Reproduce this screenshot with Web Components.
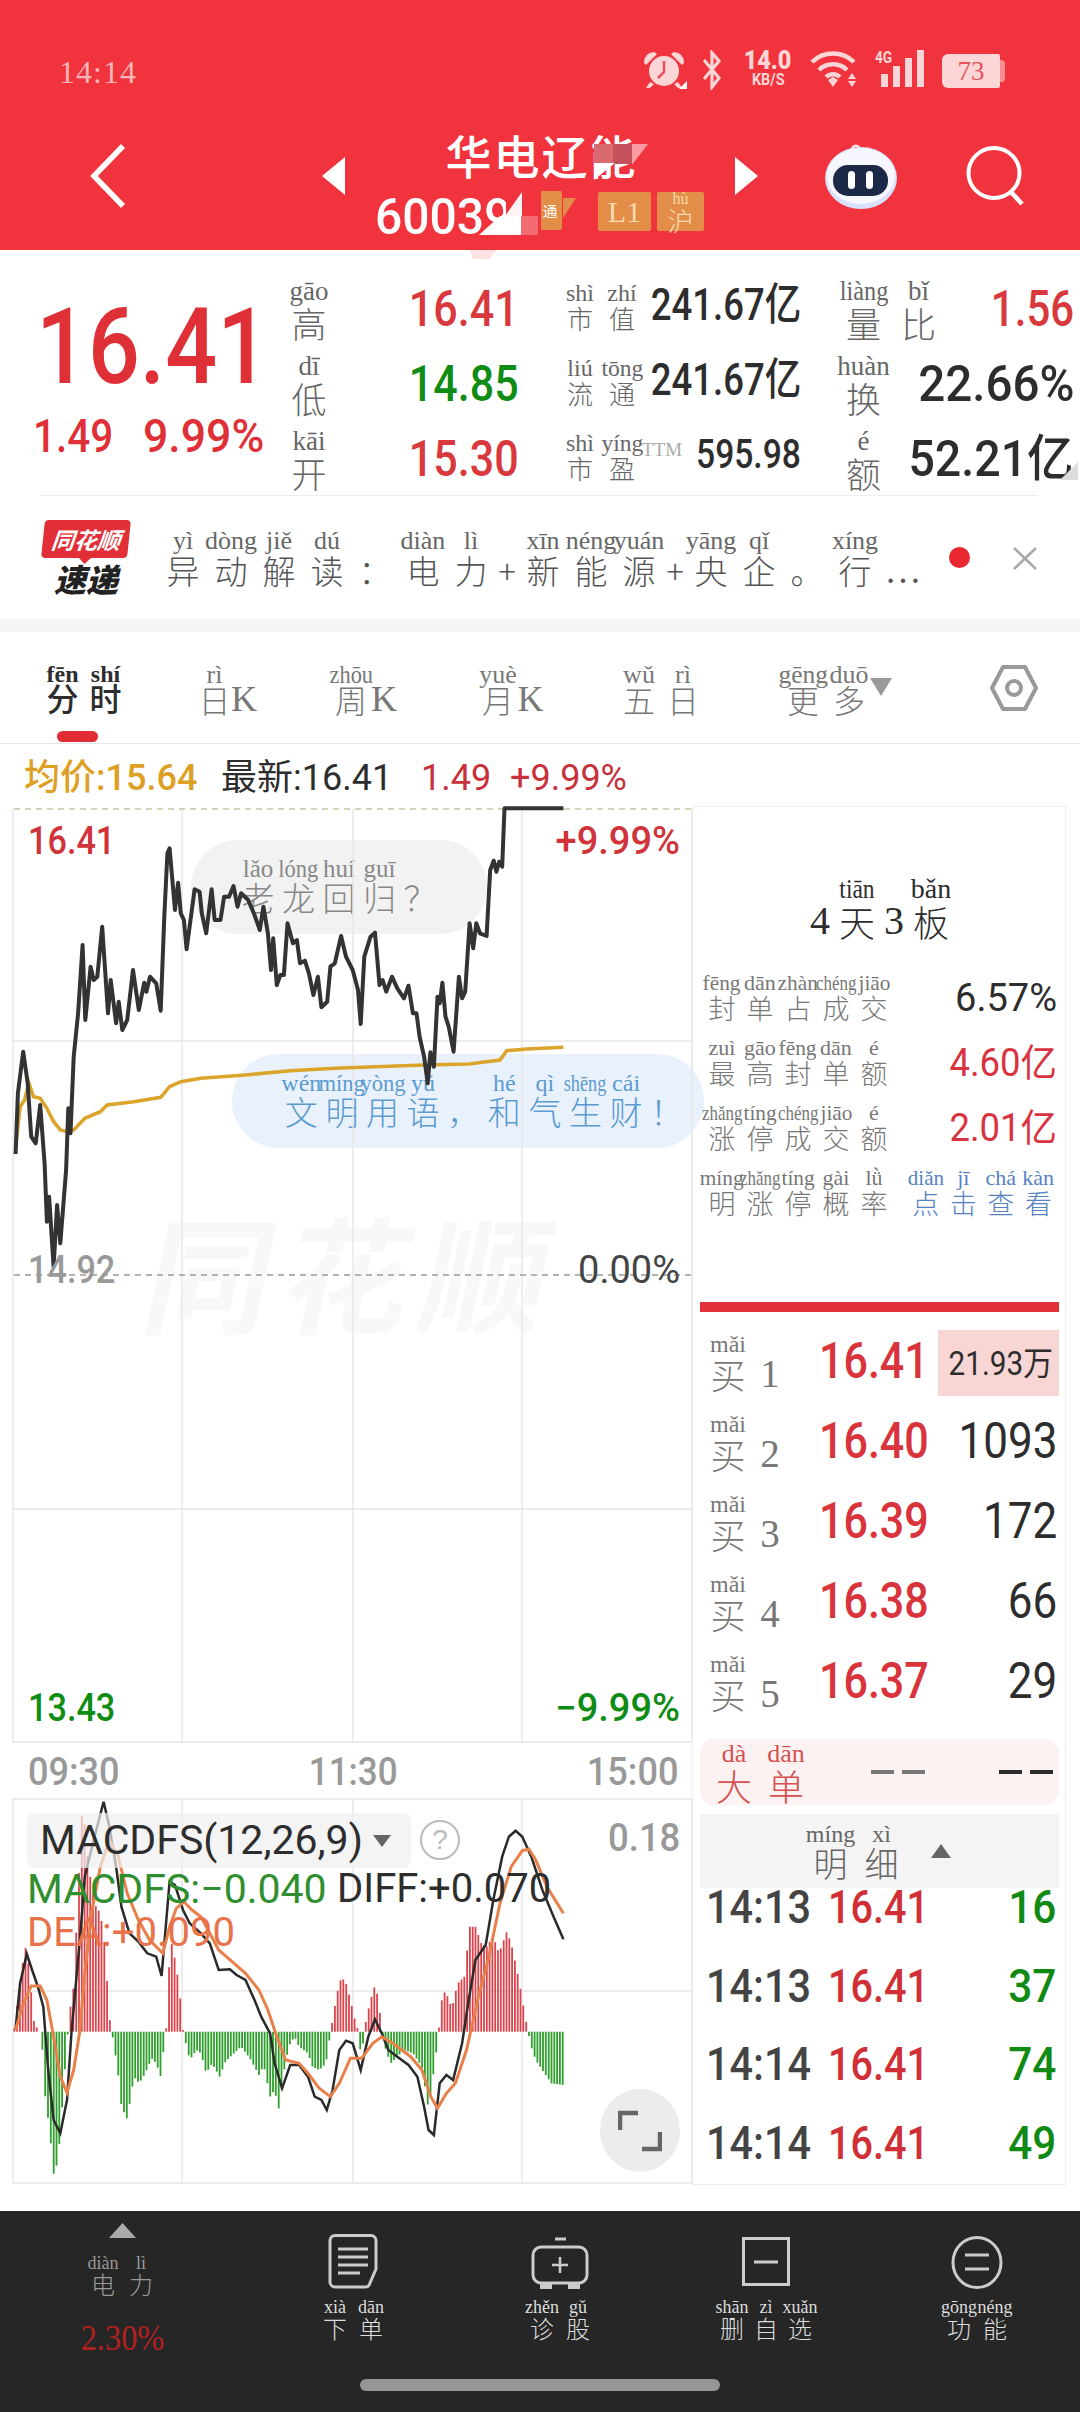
<!DOCTYPE html>
<html lang="zh"><head><meta charset="utf-8"><title>华电辽能</title>
<style>
html,body{margin:0;padding:0;background:#fff}
body{width:1080px;height:2412px;overflow:hidden;font-family:"Noto Sans CJK SC",sans-serif}
x-app{display:block}
</style></head><body><x-app></x-app>
<script>
const def=(n,css,html)=>customElements.define(n,class extends HTMLElement{constructor(){super();const s=this.attachShadow({mode:'open'});const t=document.createElement('template');t.innerHTML=`<style>${css}</style>${html}`;s.append(t.content.cloneNode(true));}});

customElements.define('x-ruby',class extends HTMLElement{
  connectedCallback(){
    if(this.shadowRoot)return;
    const s=this.attachShadow({mode:'open'});
    const g=k=>this.getAttribute(k);
    const chars=[...(g('t')||'')],py=(g('p')||'').split(' '),w=+g('w')||40,sz=+g('s')||30,ps=+g('ps')||20,aw=+g('aw')||Math.round(w*.7);
    const cols=chars.map((c,i)=>{
      const p=py[i]&&py[i]!=='_'?py[i]:'';
      const n=[...p].length;const est=n*ps*.47;const sq=Math.min(1,(w+2)/est);
      const latin=/[0-9A-Za-z…]/.test(c);const half=c==='+';
      const cw=/[0-9A-Za-z]/.test(c)?aw:half?w/2:w;
      return `<span class="c" style="width:${cw}px"><span class="p" style="transform:scaleX(${sq.toFixed(2)})">${p||'&nbsp;'}</span><span class="h${latin?' l':''}">${c}</span></span>`;
    }).join('');
    s.innerHTML=`<style>
    :host{display:inline-flex;line-height:1;vertical-align:top}
    .c{display:flex;flex-direction:column;align-items:center;flex:none}
    .p{font:${ps}px/${ps}px "Liberation Serif",serif;height:${ps}px;white-space:nowrap;display:block;font-weight:var(--pw,400);color:var(--pc,inherit)}
    .h{font:var(--hw,300) ${sz}px/${sz}px "Noto Sans CJK SC",sans-serif;height:${sz}px;white-space:nowrap;display:block;margin-top:var(--rg,0px)}
    .l{font:300 ${Math.round(sz*1.12)}px/${sz}px "Liberation Serif",serif}
    </style>${cols}`;
  }
});

def('x-num',`:host{display:inline-block;font-family:Roboto,"Noto Sans CJK SC",sans-serif;white-space:nowrap;line-height:1;transform:scaleX(var(--sx,1));transform-origin:var(--ox,left) center}`,`<slot></slot>`);

def('x-statusbar',`
:host{display:flex;height:118px;box-sizing:border-box;padding:50px 75px 0 59px;justify-content:space-between;align-items:flex-start;color:#fcd6d6}
.t{font:300 32px/44px "Liberation Serif",serif;color:#f9b4b6;letter-spacing:1px}
.r{display:flex;align-items:flex-start;gap:15px;height:40px}
.sp{display:flex;flex-direction:column;align-items:center;font-family:Roboto,sans-serif;font-weight:700;width:56px;line-height:1}
.sp b{font-size:26px;transform:scaleX(.9);height:23px;display:block;line-height:24px}
.sp i{font-style:normal;font-size:17px;transform:scaleX(.85);display:block;line-height:16px}
.net{position:relative;width:52px;height:38px}
.net span{position:absolute;left:0;top:-1px;font:700 16px/18px Roboto,sans-serif;transform:scaleX(.85);transform-origin:left}
.bat{display:flex;align-items:stretch;height:34px;margin-top:4px}
.bat b{width:58px;background:#fcd6d6;border-radius:6px 2px 2px 6px;font:300 27px/34px "Liberation Serif",serif;color:#e6545c;text-align:center}
.bat i{width:5px;background:#f78f94;border-radius:0 4px 4px 0;margin:6px 0}
`,`<span class="t">14:14</span><span class="r">
<svg width="46" height="40" viewBox="0 0 46 40"><g fill="#fcd6d6"><circle cx="22" cy="21" r="15"/><path d="M2 13 Q2 3 12 2 L15 4 L4 15Z M42 13 Q42 3 32 2 L29 4 L40 15Z M8 32l-4 6h4l4-4z M36 32l4 6h-4l-4-4z"/></g><path d="M22 11v11l-6 6" stroke="#e85058" stroke-width="2.5" fill="none"/><path d="M37 39l8-8v8z" fill="#fff"/></svg>
<svg width="22" height="40" viewBox="0 0 22 40" style="margin-left:-2px"><path d="M3 10l15 18-7 9V3l7 8L3 29" fill="none" stroke="#fcd6d6" stroke-width="3.2"/></svg>
<span class="sp" style="margin:-2px 0 0 2px"><b>14.0</b><i>KB/S</i></span>
<svg width="50" height="38" viewBox="0 0 50 38" style="margin-left:-1px"><g fill="none" stroke="#fcd6d6" stroke-width="4.5"><path d="M2 12A30 30 0 0 1 44 12"/><path d="M9 20A20 20 0 0 1 37 20"/><path d="M16 27A10 10 0 0 1 30 27"/></g><path d="M18 30l5-3 5 3-5 7z" fill="#fcd6d6"/><path d="M42 23l4 6h-8zM42 37l4-6h-8z" fill="#fcd6d6"/></svg>
<span class="net"><span>4G</span><svg width="52" height="38" viewBox="0 0 52 38" style="display:block"><g fill="#fcd6d6"><rect x="6" y="24" width="7" height="13"/><rect x="18" y="16" width="7" height="21"/><rect x="30" y="8" width="7" height="29" /><rect x="42" y="0" width="7" height="37"/></g></svg></span>
<span class="bat"><b>73</b><i></i></span></span>`);

def('x-header',`
:host{display:block;height:250px;background:#f1333d;color:#fff;overflow:visible;position:relative;z-index:1}
.nav{display:grid;grid-template-columns:232px 23px 390px 23px 67px 72px 69px 59px 55px;padding:0 0 16px 90px;height:132px;box-sizing:border-box;align-items:center}
.mid{align-self:start;position:relative;display:flex;flex-direction:column;align-items:center;padding-top:11px}
.name{font:500 46px/50px "Noto Sans CJK SC",sans-serif;letter-spacing:2px;height:50px;margin-left:3px}
.code{display:flex;align-items:flex-start;margin-top:13px;height:42px;align-self:flex-start;padding-left:30px}
.cn{width:165px;height:42px;flex:none}
.tg{background:#e38e48;color:#fbdcae;display:flex;align-items:center;justify-content:center;height:39px;border-radius:2px;flex:none}
.ov{position:absolute;left:0;top:0;overflow:visible;pointer-events:none}
`,`<x-statusbar></x-statusbar><div class="nav">
<svg width="36" height="64" viewBox="0 0 36 64"><path d="M33 2L4 32l29 30" fill="none" stroke="#fff" stroke-width="5.5"/></svg>
<svg width="23" height="38" viewBox="0 0 23 38"><path d="M23 0v38L0 19z" fill="#fff"/></svg>
<div class="mid"><div class="name">华电辽能</div>
<div class="code"><span class="cn"><x-num style="font-size:50px;font-weight:500;--sx:.96">600396</x-num></span>
<span class="tg" style="width:24px;color:#fff;font-size:15px;margin-left:-2px;margin-top:-1px">通</span>
<span class="tg" style="width:53px;margin-left:36px;font:300 30px 'Liberation Serif',serif">L1</span>
<span class="tg" style="width:47px;margin-left:6px"><x-ruby t="沪" p="hù" w="44" s="26" ps="16"></x-ruby></span></div>
<svg class="ov" width="390" height="140"><g transform="translate(-345 -118)">
<rect x="594" y="144" width="19" height="20" fill="#d96a70"/><rect x="613" y="144" width="19" height="20" fill="#c4525c"/><path d="M632 144h16l-16 21z" fill="#fa9ca2"/><path d="M594 163h21l-21 17z" fill="#fff"/>
<path d="M521 190h20v46h-20zM506 190h16v26h-16z" fill="#f1333d"/><path d="M505 216l17-24v24z" fill="#fff" opacity=".95"/>
<path d="M479 235l21-19h21v19z" fill="#fff"/><rect x="521" y="216" width="17" height="19" fill="#f36c74"/><path d="M563 198h13l-13 20z" fill="#e38e48"/>
<path d="M470 250h27l-8 9h-16z" fill="#fde3e3"/></g></svg></div>
<svg width="23" height="38" viewBox="0 0 23 38"><path d="M0 0v38l23-19z" fill="#fff"/></svg><span></span>
<svg width="72" height="66" viewBox="0 0 72 66"><path d="M29 11c-5-4-1-9 3-8 3 1 3 4 1 5" fill="none" stroke="#fbdada" stroke-width="2.5"/><ellipse cx="36" cy="35" rx="36" ry="31" fill="#d9e1fb"/><ellipse cx="36" cy="33" rx="34" ry="28" fill="#f7f8ff"/><rect x="8" y="22" width="55" height="31" rx="15" fill="#1d2a47"/><rect x="23" y="28" width="7" height="18" rx="3.5" fill="#fff"/><rect x="41" y="28" width="7" height="18" rx="3.5" fill="#fff"/></svg><span></span>
<svg width="59" height="60" viewBox="0 0 59 60"><ellipse cx="28" cy="27" rx="25.5" ry="25" fill="none" stroke="#fff" stroke-width="4"/><path d="M45 46l11 12" stroke="#fff" stroke-width="4.5"/></svg><span></span>
</div>`);

def('x-stat',`:host{display:flex;justify-content:space-between;align-items:center;height:75px;padding-left:var(--pl,0);color:#2d2d2d}
::slotted([slot=l]){color:#666}
::slotted([slot=v]){margin-left:-90px}`,`<slot name="l"></slot><slot name="v"></slot>`);

def('x-quote',`
:host{display:grid;grid-template-columns:285px 239px 277px 276px;grid-template-rows:repeat(3,75px);height:245px;box-sizing:border-box;padding-top:21px;position:relative;align-content:start}
.big{grid-row:1/4;padding-left:36px;display:flex;flex-direction:column}
.big x-num{color:#df3038}
.sub{display:flex;margin:13px 0 0 -3px;height:46px}
x-num{--ox:right}
.red{color:#d9383d}.grn{color:#0e8c14}
.tri{position:absolute;left:1056px;top:212px}
`,`<div class="big"><x-num style="font-size:105px;line-height:105px;margin-top:24px;--sx:.87;--ox:left;font-weight:500">16.41</x-num>
<div class="sub"><x-num style="font-size:46px;--ox:left;--sx:.88;width:110px;font-weight:500">1.49</x-num><x-num style="font-size:46px;--ox:left;--sx:.97;font-weight:500">9.99%</x-num></div></div>
<x-stat><x-ruby slot="l" t="高" p="gāo" w="48" s="35" ps="27"></x-ruby><x-num slot="v" class="red" style="font-size:50px;--sx:.86;font-weight:500;margin-right:5px">16.41</x-num></x-stat>
<x-stat style="--pl:35px"><x-ruby slot="l" t="市值" p="shì zhí" w="42" s="26" ps="24" style="margin-top:-6px"></x-ruby><x-num slot="v" style="font-size:44px;--sx:.83;font-weight:500;margin-top:-8px">241.67亿</x-num></x-stat>
<x-stat style="--pl:35px"><x-ruby slot="l" t="量比" p="liàng bǐ" w="55" s="35" ps="27"></x-ruby><x-num slot="v" class="red" style="font-size:50px;--sx:.84;font-weight:500;margin-right:3px">1.56</x-num></x-stat>
<x-stat><x-ruby slot="l" t="低" p="dī" w="48" s="35" ps="27"></x-ruby><x-num slot="v" class="grn" style="font-size:50px;--sx:.86;font-weight:500;margin-right:5px">14.85</x-num></x-stat>
<x-stat style="--pl:35px"><x-ruby slot="l" t="流通" p="liú tōng" w="42" s="26" ps="24" style="margin-top:-6px"></x-ruby><x-num slot="v" style="font-size:44px;--sx:.83;font-weight:500;margin-top:-8px">241.67亿</x-num></x-stat>
<x-stat style="--pl:35px"><x-ruby slot="l" t="换" p="huàn" w="55" s="35" ps="27"></x-ruby><x-num slot="v" style="font-size:50px;--sx:.95;font-weight:500;margin-right:3px">22.66%</x-num></x-stat>
<x-stat><x-ruby slot="l" t="开" p="kāi" w="48" s="35" ps="27"></x-ruby><x-num slot="v" class="red" style="font-size:50px;--sx:.86;font-weight:500;margin-right:5px">15.30</x-num></x-stat>
<x-stat style="--pl:35px"><span slot="l" style="display:flex;color:#666;margin-top:-6px"><x-ruby t="市盈" p="shì yíng" w="42" s="26" ps="24"></x-ruby><span style="font:300 19px/22px 'Liberation Serif',serif;color:#aaa;margin:8px 0 0 -1px">TTM</span></span><x-num slot="v" style="font-size:41px;--sx:.82;font-weight:500;margin-top:-8px">595.98</x-num></x-stat>
<x-stat style="--pl:35px"><x-ruby slot="l" t="额" p="é" w="55" s="35" ps="27"></x-ruby><x-num slot="v" style="font-size:50px;--sx:.93;font-weight:500;margin-right:3px">52.21亿</x-num></x-stat>
<svg class="tri" width="24" height="20"><path d="M22 0v18H4z" fill="#dcdcdc"/></svg>`);

def('x-news',`
:host{display:flex;align-items:center;height:124px;margin:0 42px 0 41px;border-top:1.5px solid #eee;box-sizing:border-box;color:#555;position:relative}
.logo{width:90px;flex:none;display:flex;flex-direction:column;align-items:center;margin-top:-2px}
.a{width:86px;height:38px;background:#e22f37;border-radius:4px;color:#fff;font:italic 700 23px/38px "Noto Sans CJK SC",sans-serif;text-align:center;transform:skewX(-6deg);position:relative}
.a:after{content:"";position:absolute;left:37px;top:37px;border:7px solid transparent;border-top-color:#e22f37;border-bottom:0}
.b{font:italic 900 32px/32px "Noto Sans CJK SC",sans-serif;color:#222;margin-top:4px}
x-ruby{margin:0 0 0 28px;--pc:#666}
.d{position:absolute;left:908px;top:51px;width:21px;height:21px;border-radius:50%;background:#e8272f}
.x{position:absolute;left:971px;top:50px}
`,`<div class="logo"><div class="a">同花顺</div><div class="b">速递</div></div>
<x-ruby t="异动解读：电力+新能源+央企。行…" p="yì dòng jiě dú _ diàn lì _ xīn néng yuán _ yāng qǐ _ xíng _" w="48" s="33" ps="26"></x-ruby>
<span class="d"></span><svg class="x" width="26" height="25" viewBox="0 0 26 25"><path d="M2 2l22 21M24 2L2 23" stroke="#aaa" stroke-width="2.6" fill="none"/></svg>`);

def('x-tabs',`
:host{display:grid;grid-template-columns:158px 137px 144px 137px 163px 210px 90px;padding-left:41px;border-top:13px solid #f5f5f5;border-bottom:1.5px solid #e6e6e6;box-sizing:border-box;height:125px;color:#777;position:relative;align-items:start;--rg:-5px}
x-ruby{margin-top:30px}
.on{color:#2d2d2d;--hw:500;--pw:700}
.ind{position:absolute;left:57px;top:99px;width:41px;height:11px;border-radius:6px;background:#e32d35}
.m{display:flex;align-items:flex-start}
svg{margin-top:46px}
`,`<x-ruby class="on" t="分时" p="fēn shí" w="43" s="32" ps="24"></x-ruby>
<x-ruby t="日K" p="rì _" w="31" s="32" ps="26" aw="28"></x-ruby>
<x-ruby t="周K" p="zhōu _" w="40" s="32" ps="26" aw="26" style="margin-left:-5px"></x-ruby>
<x-ruby t="月K" p="yuè _" w="36" s="32" ps="26" aw="29"></x-ruby>
<x-ruby t="五日" p="wǔ rì" w="44" s="32" ps="26"></x-ruby>
<span class="m"><x-ruby t="更多" p="gēng duō" w="46" s="32" ps="26"></x-ruby><svg width="22" height="18" viewBox="0 0 22 18" style="margin-left:-2px;margin-top:46px"><path d="M0 0h22L11 18z" fill="#999"/></svg></span>
<svg width="48" height="48" viewBox="0 0 48 48" style="margin-top:32px"><path d="M13 3h22l11 21-11 21H13L2 24z" fill="none" stroke="#999" stroke-width="4" stroke-linejoin="round"/><circle cx="24" cy="24" r="7" fill="none" stroke="#999" stroke-width="4"/></svg>
<span class="ind"></span>`);

def('x-legend',`:host{display:flex;height:62px;align-items:center;padding:6px 0 0 24px;box-sizing:border-box}
x-num{font-size:36px}`,`<x-num style="color:#dda024;width:197px;font-weight:500">均价:15.64</x-num><x-num style="color:#2d2d2d;width:200px">最新:16.41</x-num><x-num style="color:#c8303a;width:89px">1.49</x-num><x-num style="color:#c8303a">+9.99%</x-num>`);

const P=(pts,ox=12,oy=6,base=0)=>pts.trim().split(/\s+/).map(s=>{const[a,b]=s.split(',');return (a/2.24-ox).toFixed(1)+','+(b/3-oy+base).toFixed(1)}).join(' ');
const priceLine=`35,1062 40,880 52,755 62,850 70,1010 80,1030 90,915 100,1090 105,1265 110,1190 120,1400 128,1215 135,1330 148,1110 153,925 158,1000 165,770 175,640 185,435 191,660 203,500 210,540 218,530 229,380 242,640 248,540 260,670 266,605 274,690 285,660 298,510 311,630 323,548 328,575 336,530 350,550 360,632 368,350 375,160 380,145 392,330 399,248 405,340 412,360 418,448 436,268 447,275 452,340 462,400 474,268 481,360 494,360 502,290 513,290 523,258 532,320 540,280 556,300 570,345 582,390 590,320 600,400 607,510 612,415 620,555 628,525 636,525 644,370 656,430 665,420 672,490 683,482 692,520 702,585 712,530 720,622 733,605 740,500 750,490 764,408 775,470 790,510 802,570 808,672 816,470 830,410 840,398 850,555 857,540 865,575 878,530 890,565 905,595 915,557 925,640 933,640 940,710 950,770 958,850 964,757 972,800 980,590 985,610 991,548 998,650 1005,680 1016,755 1028,530 1035,595 1042,575 1052,370 1060,445 1067,370 1075,400 1090,408 1098,210 1106,182 1112,215 1118,185 1125,200 1130,25 1262,25`;
const avgLine=`35,1040 45,920 55,900 65,850 75,890 90,895 105,925 120,965 135,990 150,995 165,990 190,955 225,935 240,915 300,905 360,892 380,860 405,845 450,835 550,825 650,812 750,805 950,795 1050,792 1120,780 1135,752 1180,747 1262,742`;
const diffLine=`35,985 45,850 60,762 72,810 85,860 97,920 108,1110 120,1260 135,1300 150,1200 160,1000 170,850 180,700 190,530 210,420 232,305 245,380 260,500 272,620 290,700 310,725 330,760 350,770 362,828 370,700 380,545 392,555 410,630 425,670 450,700 470,730 490,810 515,808 530,825 550,840 570,900 585,950 605,1000 615,1090 632,1165 650,1095 670,1095 690,1130 705,1190 720,1200 732,1230 745,1170 760,1050 775,1022 790,1030 808,1110 825,1010 840,958 855,1000 870,1050 890,1070 915,1095 935,1130 950,1220 960,1290 972,1305 985,1150 1000,1125 1015,1140 1035,1030 1050,900 1065,780 1088,735 1105,600 1125,470 1140,410 1155,392 1170,410 1190,470 1215,570 1240,650 1262,718`;
const deaLine=`35,990 50,920 70,858 90,858 105,900 120,1010 135,1130 150,1178 165,1110 178,1000 190,820 205,640 225,500 245,420 265,470 285,580 310,660 335,720 365,760 380,680 395,625 412,605 430,630 450,650 470,700 490,750 520,785 550,820 580,870 600,930 620,1010 640,1080 670,1090 690,1120 715,1165 740,1190 760,1150 785,1075 810,1075 835,1030 855,1010 880,1030 920,1070 945,1110 965,1190 980,1225 1000,1180 1020,1150 1045,1050 1070,900 1095,770 1120,610 1145,500 1170,452 1185,448 1200,480 1225,560 1262,640`;
const env=`32,985 40,900 48,820 56,735 65,800 75,960 85,990 92,995 97,1085 103,1230 110,1265 116,1365 122,1445 130,1360 136,1300 142,1150 150,1050 152,995 155,945 165,860 175,570 185,300 195,460 205,560 215,620 225,640 235,740 245,950 250,995 255,1030 265,1125 272,1220 284,1255 292,1200 300,1130 312,1150 325,1120 340,1075 350,1090 360,1130 368,1030 372,995 375,840 385,730 395,800 402,870 410,990 418,1040 425,1080 440,1050 450,1060 462,1120 475,1090 492,1130 505,1085 520,1065 540,1040 560,1075 582,1130 590,1090 605,1190 615,1170 625,1230 632,1150 640,1080 650,1030 660,1010 670,1040 690,1060 700,1100 715,1110 730,1090 740,1000 745,960 755,880 765,830 775,850 785,900 795,960 802,990 808,1060 815,1020 820,960 830,900 840,855 848,900 855,990 862,1040 875,1090 890,1070 905,1050 925,1060 945,1100 960,1230 975,1080 982,1000 985,960 992,870 1003,890 1012,925 1025,850 1040,830 1052,680 1065,680 1078,730 1090,740 1105,710 1118,760 1135,695 1145,730 1158,810 1168,880 1175,940 1182,990 1190,1040 1200,1080 1215,1110 1235,1150 1262,1155`.split(' ').map(s=>s.split(',').map(Number));
function bars(){
  let o='';let i=0;
  for(let x=32;x<=1264;x+=6.3){
    while(i<env.length-2&&env[i+1][0]<x)i++;
    const[a,b]=env[i],[c,d]=env[i+1];let v=b+(d-b)*Math.max(0,Math.min(1,(x-a)/(c-a)));
    if(Math.abs(v-995)<4)continue;
    const px=(x/2.24-12).toFixed(1);const y0=995/3+894,y1=v/3+894;
    o+=`<path d="M${px} ${y0.toFixed(1)}V${y1.toFixed(1)}" stroke="${v<995?'#d9444c':'#2f9e2c'}"/>`;
  }
  return o;
}
const grid=(()=>{
 let g='';
 for(const y of [235,703,936,993,1185,1377])g+=`<path d="M0 ${y}H680"/>`;
 for(const x of [1,170,341,510,680])g+=`<path d="M${x} 3V936M${x} 993V1377"/>`;
 return g;
})();

def('x-chart',`
:host{display:grid;grid-template-rows:937px 57px 385px;width:680px;height:1379px;position:relative;font-size:38px;flex:none}
svg.c{position:absolute;left:0;top:0;z-index:1;overflow:visible}
.pill{position:absolute;display:flex;justify-content:center;align-items:center;border-radius:47px;height:94px;z-index:0}
.wm{position:absolute;left:138px;top:398px;font:700 126px/130px "Noto Sans CJK SC",sans-serif;letter-spacing:12px;color:#f8f8f8;transform:skewX(-12deg);white-space:nowrap;z-index:0}
.pr{position:relative;z-index:2;display:grid;grid-template-rows:38px 391px 38px 400px 38px;padding-top:16px;box-sizing:border-box}
.row{display:flex;justify-content:space-between;align-items:center;padding:0 12px 0 16px}
.r{color:#d0333a}.g{color:#0e8c14}
.tm{position:relative;display:flex;justify-content:space-between;align-items:center;padding:0 14px 0 16px;color:#999;z-index:2}
.mc{position:relative;z-index:2;padding:13px 12px 0 15px}
.l1{display:flex;align-items:flex-start}
.bx{width:384px;height:55px;background:rgba(240,240,240,.7);border-radius:8px;display:flex;align-items:center;box-sizing:border-box;padding-left:13px;color:#2d2d2d}
.bx svg{margin-left:3px}
.q{width:40px;height:40px;border:2.5px solid #bbb;border-radius:50%;box-sizing:border-box;font:400 28px/35px "Liberation Sans",sans-serif;color:#bbb;text-align:center;margin:7px 0 0 9px}
.fs{position:absolute;right:12px;bottom:13px;width:80px;height:83px;border-radius:50%;background:#ececec;display:flex;align-items:center;justify-content:center;z-index:2}
`,`<div class="wm">同花顺</div>
<div class="pill" style="left:179px;top:34px;width:296px;background:#f2f2f2;color:#888"><x-ruby t="老龙回归？" p="lǎo lóng huí guī _" w="40.5" s="33" ps="25" style="margin-top:-4px"></x-ruby></div>
<div class="pill" style="left:220px;top:248px;width:472px;background:#e9f2fc;color:#5b9bd0"><x-ruby t="文明用语，和气生财！" p="wén míng yòng yǔ _ hé qì shēng cái _" w="40.6" s="33" ps="24" style="margin:-3px 0 0 32px"></x-ruby></div>
<svg class="c" width="680" height="1379" viewBox="0 0 680 1379">
<g stroke="#e6e6e6" stroke-width="1.4" fill="none">${grid}</g>
<path d="M2 3H680" stroke="#c9c2a2" stroke-width="1.6" stroke-dasharray="6 5"/>
<path d="M2 469H680" stroke="#9a9a9a" stroke-width="1.6" stroke-dasharray="6 5"/>
<polyline points="${P(avgLine)}" fill="none" stroke="#dba52c" stroke-width="3.6"/>
<polyline points="${P(priceLine)}" fill="none" stroke="#333" stroke-width="4" stroke-linejoin="round"/>
<g stroke-width="1.8">${bars()}</g>
<polyline points="${P(diffLine,12,6,900)}" fill="none" stroke="#2a2a2a" stroke-width="2.5"/>
<polyline points="${P(deaLine,12,6,900)}" fill="none" stroke="#e8804a" stroke-width="3"/>
</svg>
<div class="pr">
<div class="row"><x-num class="r" style="--sx:.9;font-weight:500;font-size:38px">16.41</x-num><x-num class="r" style="font-size:38px;font-weight:500;--ox:right">+9.99%</x-num></div><span></span>
<div class="row"><x-num style="color:#999;--sx:.9;font-size:38px;font-weight:500">14.92</x-num><x-num style="color:#444;font-size:38px;--ox:right">0.00%</x-num></div><span></span>
<div class="row"><x-num class="g" style="--sx:.9;font-size:38px;font-weight:500">13.43</x-num><x-num class="g" style="font-size:38px;font-weight:500;--ox:right">−9.99%</x-num></div></div>
<div class="tm"><x-num style="font-size:38px;--sx:.95;font-weight:500">09:30</x-num><x-num style="font-size:38px;--sx:.92;--ox:center;font-weight:500">11:30</x-num><x-num style="font-size:38px;--sx:.95;--ox:right;font-weight:500">15:00</x-num></div>
<div class="mc"><div class="l1"><div class="bx"><x-num style="font-size:41px;width:329px">MACDFS(12,26,9)</x-num><svg width="20" height="12" viewBox="0 0 20 12"><path d="M1 0h18L10 12z" fill="#666"/></svg></div><div class="q">?</div><x-num style="font-size:38px;color:#999;margin:6px 0 0 auto;--ox:right;--sx:.96;font-weight:500">0.18</x-num></div>
<div style="display:flex;height:46px;align-items:center;margin-top:-2px"><x-num style="font-size:41px;color:#2f8f2f;width:310px">MACDFS:−0.040</x-num><x-num style="font-size:40px;color:#2d2d2d">DIFF:+0.070</x-num></div>
<div style="display:flex;height:42px;align-items:center"><x-num style="font-size:40px;color:#e8734a">DEA:+0.090</x-num></div></div>
<div class="fs"><svg width="44" height="42" viewBox="0 0 44 42"><path d="M2 20V3h18M42 22v17H24" fill="none" stroke="#666" stroke-width="4.5"/></svg></div>`);

def('x-limit-row',`:host{display:flex;justify-content:space-between;align-items:flex-end;height:65px;padding:0 8px 0 10px;color:#777}`,`<slot name="l"></slot><slot name="v"></slot>`);

def('x-limit',`
:host{display:flex;flex-direction:column;height:495px;box-sizing:border-box;padding-top:68px;color:#2d2d2d}
.ti{align-self:center;margin-bottom:17px;margin-left:-2px}
.r{color:#d9333f}
`,`<x-ruby class="ti" t="4天3板" p="_ tiān _ bǎn" w="42" s="36" ps="28" aw="32"></x-ruby>
<x-limit-row><x-ruby slot="l" t="封单占成交" p="fēng dān zhàn chéng jiāo" w="38" s="27" ps="22"></x-ruby><x-num slot="v" style="font-size:38px;color:#2d2d2d;--ox:right;margin-bottom:4px">6.57%</x-num></x-limit-row>
<x-limit-row><x-ruby slot="l" t="最高封单额" p="zuì gāo fēng dān é" w="38" s="27" ps="22"></x-ruby><x-num slot="v" class="r" style="font-size:38px;--ox:right;--sx:.96;margin-bottom:4px">4.60亿</x-num></x-limit-row>
<x-limit-row><x-ruby slot="l" t="涨停成交额" p="zhǎng tíng chéng jiāo é" w="38" s="27" ps="22"></x-ruby><x-num slot="v" class="r" style="font-size:38px;--ox:right;--sx:.96;margin-bottom:4px">2.01亿</x-num></x-limit-row>
<x-limit-row><x-ruby slot="l" t="明涨停概率" p="míng zhǎng tíng gài lǜ" w="38" s="27" ps="22"></x-ruby><x-ruby slot="v" t="点击查看" p="diǎn jī chá kàn" w="37.5" s="27" ps="22" style="color:#5682c2"></x-ruby></x-limit-row>`);

customElements.define('x-level',class extends HTMLElement{connectedCallback(){ if(this.shadowRoot)return;
 const s=this.attachShadow({mode:'open'});const n=this.getAttribute('n'),p=this.getAttribute('p'),v=this.getAttribute('v'),hl=this.hasAttribute('hl');
 s.innerHTML=`<style>:host{display:grid;grid-template-columns:114px minmax(0,1fr) auto;align-items:center;height:80px;padding:0 6px 0 12px;color:#2d2d2d}
 x-ruby{color:#777;--pc:#777}
 .hl{background:#f9d6d6;width:121px;height:66px;display:flex;align-items:center;justify-content:flex-end;margin:4px 0 0 0;padding-right:6px;box-sizing:border-box}
 </style><x-ruby t="买${n}" p="mǎi _" w="46" s="35" ps="24" aw="38"></x-ruby><x-num style="font-size:50px;font-weight:500;color:#d9333c;--sx:.86">${p}</x-num>
 ${hl?`<span class="hl"><x-num style="font-size:33px;--sx:.9;--ox:right">${v}</x-num></span>`:`<x-num style="font-size:50px;--sx:.88;--ox:right;margin-right:2px">${v}</x-num>`}`;
}});

def('x-tick',`:host{display:grid;grid-template-columns:122px minmax(0,1fr) auto;height:40px;align-items:center;padding:0 9px 0 13px}`,`<slot name="a"></slot><slot name="b"></slot><slot name="c"></slot>`);

def('x-side',`
:host{display:flex;flex-direction:column;width:374px;height:1379px;border-right:1.5px solid #eee;border-left:1.5px solid #f2f2f2;border-top:1.5px solid #f0f0f0;border-bottom:1.5px solid #eee;box-sizing:border-box;overflow:hidden;position:relative}
.bar{height:10px;background:#e03238;margin:0 6px 9px 7px;flex:none}
.big{display:flex;align-items:center;justify-content:space-between;height:66px;margin:18px 6px 0 7px;background:#fdf2f2;border-radius:14px;color:#d65050;padding:0 4px 0 8px;flex:none}
.dash{display:flex;gap:8px;width:54px}.dash i{flex:1;height:4px;background:#777}
.mx{display:flex;height:74px;margin:9px 6px 0 7px;background:#f4f4f4;color:#666;padding-left:105px;align-items:center;position:relative;z-index:1;flex:none}
.mx svg{margin:0 0 0 24px}
.list{display:flex;flex-direction:column;gap:38.7px;overflow:visible;margin-top:-4px}
x-num{font-size:46px;font-weight:500}
`,`<x-limit></x-limit><div class="bar"></div>
<x-level n="1" p="16.41" v="21.93万" hl></x-level><x-level n="2" p="16.40" v="1093"></x-level><x-level n="3" p="16.39" v="172"></x-level><x-level n="4" p="16.38" v="66"></x-level><x-level n="5" p="16.37" v="29"></x-level>
<div class="big"><x-ruby t="大单" p="dà dān" w="52" s="36" ps="26"></x-ruby><div style="display:flex;gap:74px;margin-right:2px"><div class="dash"><i></i><i></i></div><div class="dash"><i style="background:#2d2d2d"></i><i style="background:#2d2d2d"></i></div></div></div>
<div class="mx"><x-ruby t="明细" p="míng xì" w="51" s="34" ps="24"></x-ruby><svg width="20" height="14" viewBox="0 0 20 14"><path d="M10 0l10 14H0z" fill="#666"/></svg></div>
<div class="list">
${[['14:13','16'],['14:13','37'],['14:14','74'],['14:14','49']].map(([t,v])=>`<x-tick><x-num slot="a" style="--sx:.9;color:#444">${t}</x-num><x-num slot="b" style="--sx:.86;color:#d03035">16.41</x-num><x-num slot="c" style="--sx:.92;color:#0f8a12;--ox:right">${v}</x-num></x-tick>`).join('')}
</div>`);

def('x-main',`:host{display:flex;padding-left:12px;height:1405px;box-sizing:border-box;flex:none;align-items:flex-start}`,`<x-chart></x-chart><x-side></x-side>`);

def('x-dock-item',`:host{display:flex;flex-direction:column;align-items:center;color:#ddd;padding-top:23px;box-sizing:border-box}
.i{height:54px;display:flex;align-items:flex-start;justify-content:center}
::slotted(x-ruby){margin-top:10px}`,`<div class="i"><slot name="i"></slot></div><slot></slot>`);

def('x-dock',`
:host{display:flex;flex-direction:column;height:201px;background:#262626;align-items:center}
.g{display:grid;grid-template-columns:244px 218px 196px 216px 206px;height:168px;width:100%}
.f{display:flex;flex-direction:column;align-items:center;padding-top:12px;color:#999}
.f svg{margin-bottom:16px}
.p{font:300 36px/36px "Liberation Serif",serif;color:#b2211f;margin-top:24px;transform:scaleX(.9)}
.h{width:360px;height:12px;background:#969696;border-radius:7px}
`,`<div class="g"><div class="f"><svg width="27" height="15" viewBox="0 0 27 15"><path d="M13.5 0L27 15H0z" fill="#aaa"/></svg><x-ruby t="电力" p="diàn lì" w="38" s="24" ps="18"></x-ruby><span class="p">2.30%</span></div>
<x-dock-item><svg slot="i" width="50" height="55" viewBox="0 0 50 55"><g fill="none" stroke="#ccc" stroke-width="3"><path d="M7 1.5h36a5 5 0 0 1 5 5V35l-6 14a5 5 0 0 1-5 4H7a5 5 0 0 1-5-5V6.5a5 5 0 0 1 5-5z"/><path d="M10 15h30M10 23h30M10 31h30M10 39h22"/></g></svg><x-ruby t="下单" p="xià dān" w="36" s="24" ps="18"></x-ruby></x-dock-item>
<x-dock-item><svg slot="i" width="58" height="52" viewBox="0 0 58 52" style="margin-top:3px"><g fill="none" stroke="#ccc" stroke-width="3"><path d="M24 2h11"/><rect x="2" y="10" width="54" height="36" rx="8"/><path d="M29 20v16M21 28h16" stroke-width="2.5"/></g><path d="M9 46h12v6H9zM37 46h12v6H37z" fill="#ccc"/></svg><x-ruby t="诊股" p="zhěn gǔ" w="36" s="24" ps="18"></x-ruby></x-dock-item>
<x-dock-item><svg slot="i" width="48" height="49" viewBox="0 0 48 49" style="margin-top:3px"><g fill="none" stroke="#ccc" stroke-width="3"><rect x="1.5" y="1.5" width="45" height="46"/><path d="M12 25h24"/></g></svg><x-ruby t="删自选" p="shān zì xuǎn" w="34" s="24" ps="18"></x-ruby></x-dock-item>
<x-dock-item><svg slot="i" width="52" height="53" viewBox="0 0 52 53" style="margin-top:2px"><ellipse cx="26" cy="26.5" rx="24" ry="25" fill="none" stroke="#ccc" stroke-width="3"/><path d="M14 19h24M14 33h24" stroke="#ccc" stroke-width="3"/></svg><x-ruby t="功能" p="gōng néng" w="36" s="24" ps="18"></x-ruby></x-dock-item></div>
<div class="h"></div>`);

def('x-app',`:host{display:flex;flex-direction:column;width:1080px;height:2412px;overflow:hidden;background:#fff}`,`<x-header></x-header><x-quote></x-quote><x-news></x-news><x-tabs></x-tabs><x-legend></x-legend><x-main></x-main><x-dock></x-dock>`);
</script></body></html>
